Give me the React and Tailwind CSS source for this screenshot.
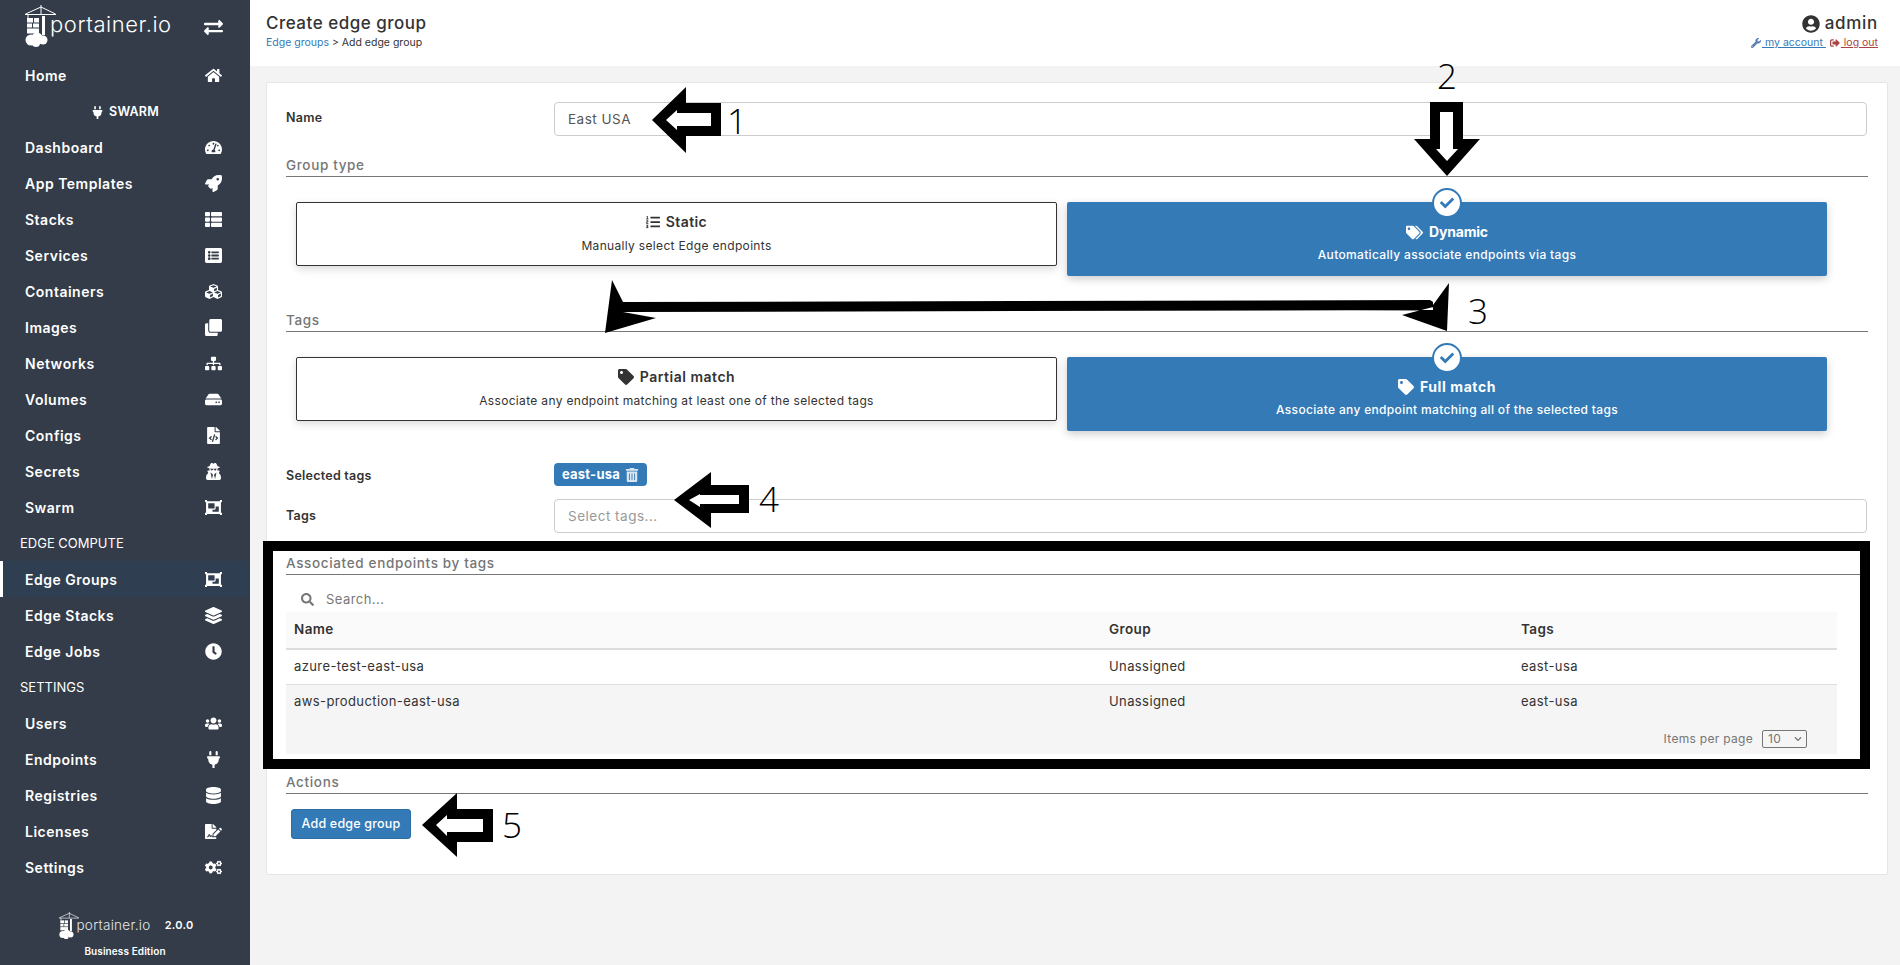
import React from "react";
import {
  FaExchangeAlt, FaHome, FaPlug, FaTachometerAlt, FaRocket, FaThList, FaListAlt, FaCubes, FaClone, FaSitemap, FaHdd,
  FaFileCode, FaUserSecret, FaObjectGroup, FaLayerGroup, FaClock, FaUsers, FaDatabase, FaFileSignature, FaCogs,
  FaUserCircle, FaWrench, FaSignOutAlt, FaTags, FaTag, FaListOl, FaCheck, FaTrashAlt, FaSearch, FaChevronDown,
} from "react-icons/fa";

function Logo({ className }) {
  return (
    <svg viewBox="0 0 31 42" className={className} fill="white">
      <path d="M16 0v9M0.5 9 16 2l14.5 7M0 9.5h31M3 9.5v4" stroke="white" strokeWidth="1" fill="none" />
      <rect x="17" y="11" width="3" height="19" />
      <rect x="2" y="13" width="6" height="4.5" />
      <rect x="9" y="13" width="5" height="4.5" />
      <rect x="2" y="18.5" width="5" height="4" />
      <rect x="8" y="18.5" width="6" height="4" />
      <rect x="2" y="23.5" width="12" height="5" />
      <circle cx="6" cy="35" r="5.5" />
      <circle cx="12" cy="33" r="5.5" />
      <circle cx="18" cy="35" r="4.5" />
      <circle cx="11" cy="38" r="4" />
    </svg>
  );
}

const group1 = [
  ["Dashboard", FaTachometerAlt],
  ["App Templates", FaRocket],
  ["Stacks", FaThList],
  ["Services", FaListAlt],
  ["Containers", FaCubes],
  ["Images", FaClone],
  ["Networks", FaSitemap],
  ["Volumes", FaHdd],
  ["Configs", FaFileCode],
  ["Secrets", FaUserSecret],
  ["Swarm", FaObjectGroup],
];
const group2 = [
  ["Edge Groups", FaObjectGroup, true],
  ["Edge Stacks", FaLayerGroup],
  ["Edge Jobs", FaClock],
];
const group3 = [
  ["Users", FaUsers],
  ["Endpoints", FaPlug],
  ["Registries", FaDatabase],
  ["Licenses", FaFileSignature],
  ["Settings", FaCogs],
];

function NavItem({ label, Icon, active }) {
  return (
    <div className={`flex h-9 items-center justify-between pl-[25px] pr-[27px] text-[14px] font-semibold tracking-[0.5px] text-white ${active ? "border-l-[3px] !pl-[22px] border-white bg-[#2f3e50]" : ""}`}>
      <span>{label}</span>
      <span className="flex w-5 justify-center text-[17px]"><Icon /></span>
    </div>
  );
}

function NavTitle({ children }) {
  return <div className="flex h-9 items-center pl-5 pt-[2px] text-[13px] font-normal text-white">{children}</div>;
}

function Sidebar() {
  return (
    <aside className="flex h-[965px] w-[250px] shrink-0 flex-col bg-[#333c48]">
      <div className="flex h-[57px] items-start justify-between pl-[25px] pr-[27px] pt-[5px]">
        <div className="flex items-start">
          <Logo className="h-[42px] w-[31px]" />
          <span className="-ml-[6px] mt-[5px] text-[22px] font-light leading-7 tracking-[0.55px] text-white">portainer.io</span>
        </div>
        <span className="mt-[13px] flex w-5 justify-center text-[19px] text-white"><FaExchangeAlt /></span>
      </div>
      <NavItem label="Home" Icon={FaHome} />
      <div className="flex h-9 items-center justify-center gap-[5px] pt-[2px] text-[12.5px] font-semibold tracking-[0.2px] text-white">
        <FaPlug className="text-[13px]" /> SWARM
      </div>
      {group1.map(([l, I]) => <NavItem key={l} label={l} Icon={I} />)}
      <NavTitle>EDGE COMPUTE</NavTitle>
      {group2.map(([l, I, a]) => <NavItem key={l} label={l} Icon={I} active={a} />)}
      <NavTitle>SETTINGS</NavTitle>
      {group3.map(([l, I]) => <NavItem key={l} label={l} Icon={I} />)}
      <div className="mt-[27px] flex flex-col items-center text-white">
        <div className="flex items-center pl-[3px]">
          <Logo className="h-[27px] w-[20px]" />
          <span className="-ml-[3px] text-[13.5px] font-light tracking-[0.3px] text-gray-200">portainer.io</span>
          <span className="ml-[14px] text-[11px] font-semibold tracking-[0.3px]">2.0.0</span>
        </div>
        <div className="mt-[5px] text-[10px] font-semibold tracking-[0.1px]">Business Edition</div>
      </div>
    </aside>
  );
}

function TopBar() {
  return (
    <header className="flex h-[66px] items-start justify-between bg-white pl-4 pr-[22px]">
      <div>
        <div className="mt-[13px] text-[17px] font-medium leading-[21px] tracking-[0.5px] text-[#333]">Create edge group</div>
        <div className="mt-[1px] text-[10.5px] leading-4 text-[#333]"><span className="text-[#337ab7]">Edge groups</span> &gt; Add edge group</div>
      </div>
      <div className="flex flex-col items-end">
        <div className="mt-[13px] flex items-center gap-[5px] text-[17px] font-medium leading-[21px] tracking-[0.7px] text-[#333]"><FaUserCircle className="text-[18px]" />admin</div>
        <div className="mt-[1px] flex items-center text-[10.5px] leading-4">
          <FaWrench className="mr-[1px] text-[10px] text-[#5a7fb5]" />
          <span className="text-[#337ab7] underline">&nbsp;my account&nbsp;</span>
          <FaSignOutAlt className="ml-[4px] mr-[1px] text-[10px] text-[#a94442]" />
          <span className="text-[#a94442] underline">&nbsp;log out</span>
        </div>
      </div>
    </header>
  );
}

function Heading({ children, className = "" }) {
  return <div className={`h-[21px] border-b border-[#777] text-[13.5px] font-medium leading-[18px] tracking-[0.65px] text-[#767676] ${className}`}>{children}</div>;
}

function BoxOption({ Icon, title, desc, selected, titleClass = "", iconClass = "" }) {
  if (selected) {
    return (
      <div className="relative flex h-[74px] flex-col items-center justify-end rounded-[2px] bg-[#337ab7] pb-[11px] text-white shadow-[0_3px_8px_rgba(0,0,0,0.2)]">
        <div className="absolute -top-[14px] left-1/2 flex h-[30px] w-[30px] -translate-x-1/2 items-center justify-center rounded-full border-2 border-[#337ab7] bg-white text-[14px] text-[#337ab7]"><FaCheck /></div>
        <div className={`flex items-center gap-[6px] text-[14px] font-bold leading-5 ${titleClass}`}><Icon className={iconClass} />{title}</div>
        <div className="mt-[3px] text-[12px] font-medium leading-5 tracking-[0.33px]">{desc}</div>
      </div>
    );
  }
  return (
    <div className="flex h-[64px] flex-col items-center justify-end rounded-[2px] border border-[#333] bg-white pb-[9px] text-[#333] shadow-[0_3px_8px_rgba(0,0,0,0.15)]">
      <div className={`flex items-center gap-[6px] text-[14px] font-semibold leading-5 ${titleClass}`}><Icon className={iconClass} />{title}</div>
      <div className="mt-[4px] text-[12px] leading-5 tracking-[0.33px]">{desc}</div>
    </div>
  );
}

function FormRow({ label, children, className = "", labelClass = "" }) {
  return (
    <div className={`flex items-center ${className}`}>
      <div className={`w-[268px] text-[12.5px] font-semibold tracking-[0.25px] text-[#333] ${labelClass}`}>{label}</div>
      <div className="flex-1">{children}</div>
    </div>
  );
}

function TextBox({ value, placeholder }) {
  return (
    <div className={`mr-px flex h-[34px] items-center rounded-[4px] border border-[#ccc] bg-white px-[13px] text-[13.5px] tracking-[0.5px] ${placeholder ? "text-[#999]" : "text-[#555]"}`}>{value || placeholder}</div>
  );
}

function Cell({ children, className = "" }) {
  return <div className={`px-2 ${className}`}>{children}</div>;
}

function EndpointRow({ name, className = "" }) {
  return (
    <div className={`grid grid-cols-[823px_412px_1fr] text-[13px] tracking-[0.4px] text-[#333] ${className}`}>
      <Cell>{name}</Cell>
      <Cell className="pl-[0px]">Unassigned</Cell>
      <Cell className="pl-[0px]">east-usa</Cell>
    </div>
  );
}

function Annotations() {
  const arrows = [
    ["652,120 686,87 686,103 721,103 721,136 686,136 686,153", "666,120 677,110 677,113 711,113 711,126 677,126 677,130"],
    ["1447,176 1414,139 1430,139 1430,102 1463,102 1463,139 1480,139", "1447,161 1436,149 1440,149 1440,112 1453,112 1453,149 1458,149"],
    ["674,500 711,472 711,485 749,485 749,513 711,513 711,528", "689,500 700,494 700,495 739,495 739,504 700,504 700,507"],
    ["422,825 457,793 457,809 493,809 493,842 457,842 457,857", "436,825 447,815 447,819 483,819 483,832 447,832 447,836"],
  ];
  return (
    <svg className="pointer-events-none absolute left-0 top-0 h-[965px] w-[1900px]" viewBox="0 0 1900 965">
      {arrows.map(([o, i]) => (
        <g key={o}>
          <polygon points={o} fill="black" />
          <polygon points={i} fill="white" />
        </g>
      ))}
      <polygon points="623,302 1430,300 1433,302 1433,307 1402,315 1447,331 1449,283 1433,305 1433,310 623,312 656,318 605,333 612,280" fill="black" />
    </svg>
  );
}

function Num({ children, className }) {
  return <div className={`absolute text-[35px] font-light leading-[40px] text-black ${className}`} style={{ fontFamily: '"Open Sans", sans-serif' }}>{children}</div>;
}

export default function App() {
  return (
    <div className="relative flex h-[965px] w-[1900px] overflow-hidden bg-[#f3f3f3]" style={{ fontFamily: 'Inter, "Noto Sans", sans-serif' }}>
      <Sidebar />
      <main className="min-w-0 flex-1">
        <TopBar />
        <div className="ml-4 mr-3 mt-4 h-[793px] rounded-[2px] border border-[#e6e6e6] bg-white px-[19px] pt-[19px]">
          <FormRow label="Name" labelClass="pb-[2px]"><TextBox value="East USA" /></FormRow>
          <Heading className="mt-[20px]">Group type</Heading>
          <div className="mt-[25px] grid grid-cols-[761px_760px] gap-[10px] pl-[10px]">
            <BoxOption Icon={FaListOl} title="Static" titleClass="tracking-[0.4px]" desc="Manually select Edge endpoints" />
            <BoxOption Icon={FaTags} iconClass="text-[17px]" title="Dynamic" titleClass="tracking-[-0.2px]" desc="Automatically associate endpoints via tags" selected />
          </div>
          <Heading className="mt-[35px]">Tags</Heading>
          <div className="mt-[25px] grid grid-cols-[761px_760px] gap-[10px] pl-[10px]">
            <BoxOption Icon={FaTag} iconClass="text-[16px]" title="Partial match" titleClass="tracking-[0.5px]" desc="Associate any endpoint matching at least one of the selected tags" />
            <BoxOption Icon={FaTag} iconClass="text-[16px]" title="Full match" titleClass="tracking-[0.6px]" desc="Associate any endpoint matching all of the selected tags" selected />
          </div>
          <FormRow label="Selected tags" labelClass="pt-[5px]" className="mt-[31px] h-[23px]">
            <span className="inline-flex h-[23px] w-[93px] items-center justify-center gap-[5px] rounded-[4px] bg-[#337ab7] text-[13px] font-bold tracking-[0.25px] text-white">east-usa <FaTrashAlt className="text-[14px] text-[#dbe7f2]" /></span>
          </FormRow>
          <FormRow label="Tags" className="mt-[14px]"><TextBox placeholder="Select tags..." /></FormRow>
          <Heading className="mt-[21px]">Associated endpoints by tags</Heading>
          <div className="flex h-[37px] items-center pl-[15px] pt-[12px] text-[13px] tracking-[0.45px] text-[#777]">
            <FaSearch className="mr-[12px] text-[13px]" />Search...
          </div>
          <div className="mr-[31px]">
            <div className="grid h-[38px] grid-cols-[823px_412px_1fr] items-center border-b-2 border-[#ddd] bg-[#fafafa] pb-[2px] text-[13.5px] font-semibold tracking-[0.4px] text-[#333]">
              <Cell>Name</Cell>
              <Cell className="pl-[0px]">Group</Cell>
              <Cell className="pl-[0px]">Tags</Cell>
            </div>
            <EndpointRow name="azure-test-east-usa" className="h-[35px] items-center border-b border-[#ddd]" />
            <div className="h-[69px] bg-[#f5f5f5]">
              <EndpointRow name="aws-production-east-usa" className="h-[34px] items-center" />
              <div className="flex items-center justify-end pr-[30px] pt-[11px] text-[12px] tracking-[0.3px] text-[#767676]">
                Items per page
                <span className="ml-[9px] flex h-[18px] w-[45px] items-center justify-between rounded-[2px] border border-[#767676] pl-[5px] pr-[4px]">10 <FaChevronDown className="text-[8px]" /></span>
              </div>
            </div>
          </div>
          <Heading className="mt-[19px]">Actions</Heading>
          <div className="ml-[5px] mt-[15px] flex h-[30px] w-[120px] items-center justify-center rounded-[3px] border border-[#2e6da4] bg-[#337ab7] text-[12.5px] font-medium tracking-[0.2px] text-white">Add edge group</div>
        </div>
      </main>
      <Annotations />
      <div className="absolute left-[263px] top-[541px] h-[228px] w-[1607px] border-[10px] border-black" />
      <Num className="left-[727px] top-[101px]">1</Num>
      <Num className="left-[1437px] top-[56px]">2</Num>
      <Num className="left-[1468px] top-[291px]">3</Num>
      <Num className="left-[759px] top-[479px]">4</Num>
      <Num className="left-[502px] top-[805px]">5</Num>
    </div>
  );
}
